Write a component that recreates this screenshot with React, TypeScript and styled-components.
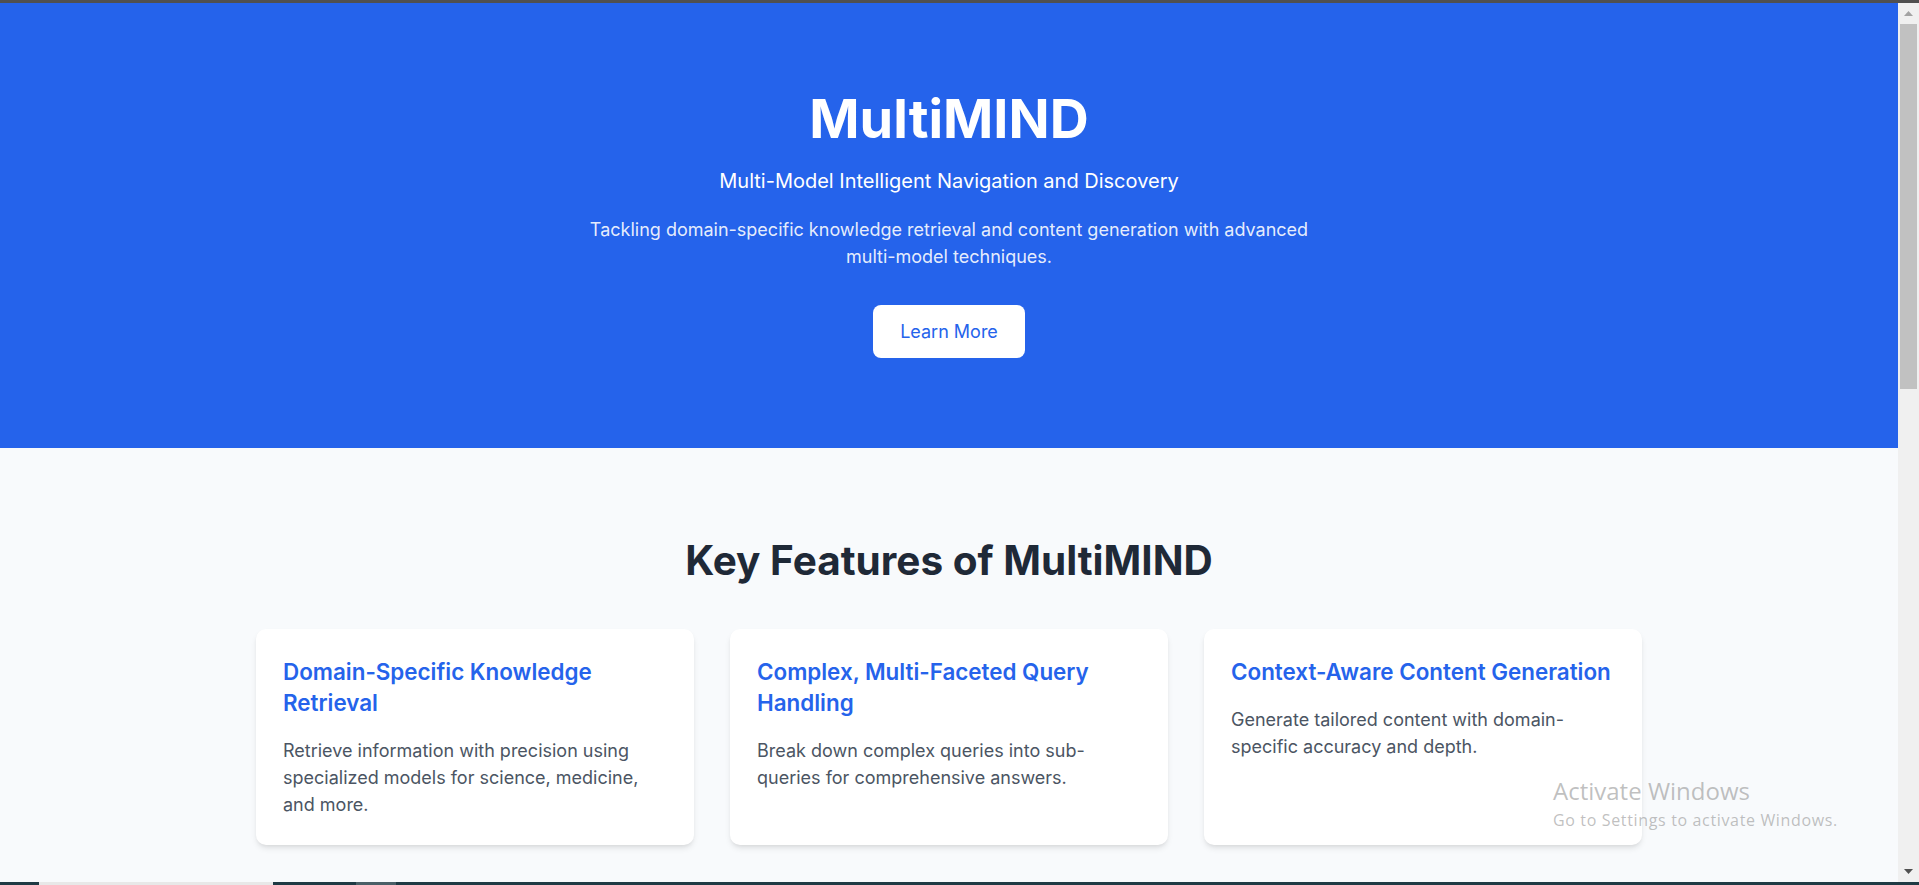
import React from "react";
import styled, { createGlobalStyle } from "styled-components";

const GlobalStyle = createGlobalStyle`
  * { box-sizing: border-box; }
  html, body { margin: 0; padding: 0; height: 100%; overflow: hidden; }
  body { font-family: Inter, "Noto Sans", sans-serif; }
  #root { height: 100%; }
`;

const Screen = styled.div`
  display: flex;
  flex-direction: column;
  width: 1919px;
  height: 885px;
  position: relative;
  overflow: hidden;
  background: #f8fafc;
`;

const TopStrip = styled.div`
  height: 3px;
  flex: none;
  background: #505050;
`;

const Middle = styled.div`
  display: flex;
  flex: 1;
  min-height: 0;
`;

const Page = styled.main`
  flex: 1;
  min-width: 0;
  overflow: hidden;
  background: #f8fafc;
`;

const Hero = styled.section`
  background: #2563eb;
  color: #ffffff;
  text-align: center;
  padding: 82px 24px 90px;
  display: flex;
  flex-direction: column;
  align-items: center;
`;

const Title = styled.h1`
  margin: 0;
  font-size: 54px;
  line-height: 68px;
  font-weight: 700;
`;

const Subtitle = styled.p`
  margin: 14px 0 0;
  font-size: 20px;
  line-height: 28px;
  font-weight: 400;
`;

const Lead = styled.p`
  margin: 21px 0 0;
  max-width: 768px;
  font-size: 18px;
  line-height: 27px;
  color: rgba(255, 255, 255, 0.9);
`;

const PrimaryButton = styled.button`
  margin-top: 35px;
  border: none;
  background: #ffffff;
  color: #2563eb;
  font-family: inherit;
  font-size: 18px;
  line-height: 27px;
  font-weight: 400;
  padding: 13px 27px;
  border-radius: 8px;
  cursor: pointer;
`;

const Features = styled.section`
  padding: 89px 0 0;
  display: flex;
  flex-direction: column;
  align-items: center;
`;

const SectionTitle = styled.h2`
  margin: 0;
  font-size: 40.5px;
  line-height: 48px;
  font-weight: 700;
  color: #1f2937;
`;

const CardGrid = styled.div`
  margin-top: 44px;
  width: 1386px;
  display: grid;
  grid-template-columns: repeat(3, 1fr);
  gap: 36px;
`;

const Card = styled.article`
  background: #ffffff;
  border-radius: 10px;
  padding: 28px 27px 27px;
  box-shadow: 0 4px 6px -1px rgba(0, 0, 0, 0.1), 0 2px 4px -2px rgba(0, 0, 0, 0.08);
  min-height: 216px;
`;

const CardTitle = styled.h3`
  margin: 0;
  font-size: 22.4px;
  line-height: 30.8px;
  font-weight: 600;
  color: #2563eb;
`;

const CardText = styled.p`
  margin: 18px 0 0;
  font-size: 18px;
  line-height: 27px;
  color: #4b5563;
`;

const Scrollbar = styled.div`
  width: 21px;
  flex: none;
  background: #f0f0f0;
  display: flex;
  flex-direction: column;
  align-items: center;
  padding: 0 2px;
`;

const ArrowBox = styled.div`
  height: 21px;
  width: 100%;
  display: flex;
  align-items: center;
  justify-content: center;
  flex: none;
`;

const Thumb = styled.div`
  width: 17px;
  height: 365px;
  background: #c1c1c1;
  flex: none;
`;

const Track = styled.div`
  flex: 1;
`;

const Taskbar = styled.div`
  height: 3px;
  flex: none;
  display: flex;
  background: #1f3a44;
`;

const TaskSegment = styled.div<{ $w: number; $c: string }>`
  width: ${(p) => p.$w}px;
  background: ${(p) => p.$c};
  flex: none;
`;

const Watermark = styled.div`
  position: absolute;
  left: 1553px;
  top: 776px;
  font-family: "Open Sans", "Noto Sans", sans-serif;
  color: rgba(150, 150, 150, 0.6);
  pointer-events: none;
`;

const WatermarkTitle = styled.div`
  font-size: 24px;
  line-height: 30px;
`;

const WatermarkSub = styled.div`
  font-size: 16px;
  line-height: 22px;
  margin-top: 3px;
  letter-spacing: 0.65px;
`;

const features = [
  {
    title: "Domain-Specific Knowledge Retrieval",
    text: "Retrieve information with precision using specialized models for science, medicine, and more.",
  },
  {
    title: "Complex, Multi-Faceted Query Handling",
    text: "Break down complex queries into sub-queries for comprehensive answers.",
  },
  {
    title: "Context-Aware Content Generation",
    text: "Generate tailored content with domain-specific accuracy and depth.",
  },
];

export default function App() {
  return (
    <>
      <GlobalStyle />
      <Screen>
        <TopStrip />
        <Middle>
          <Page>
            <Hero>
              <Title>MultiMIND</Title>
              <Subtitle>Multi-Model Intelligent Navigation and Discovery</Subtitle>
              <Lead>
                Tackling domain-specific knowledge retrieval and content generation with advanced
                multi-model techniques.
              </Lead>
              <PrimaryButton>Learn More</PrimaryButton>
            </Hero>
            <Features>
              <SectionTitle>Key Features of MultiMIND</SectionTitle>
              <CardGrid>
                {features.map((f) => (
                  <Card key={f.title}>
                    <CardTitle>{f.title}</CardTitle>
                    <CardText>{f.text}</CardText>
                  </Card>
                ))}
              </CardGrid>
            </Features>
          </Page>
          <Scrollbar>
            <ArrowBox>
              <svg width="9" height="6" viewBox="0 0 9 6">
                <polygon points="4.5,0 9,5 0,5" fill="#a3a3a3" />
              </svg>
            </ArrowBox>
            <Thumb />
            <Track />
            <ArrowBox>
              <svg width="9" height="6" viewBox="0 0 9 6">
                <polygon points="0,0 9,0 4.5,5" fill="#505050" />
              </svg>
            </ArrowBox>
          </Scrollbar>
        </Middle>
        <Taskbar>
          <TaskSegment $w={39} $c="#1f3a44" />
          <TaskSegment $w={234} $c="#e8e8e8" />
          <TaskSegment $w={83} $c="#1f3a44" />
          <TaskSegment $w={40} $c="#4a5f67" />
        </Taskbar>
        <Watermark>
          <WatermarkTitle>Activate Windows</WatermarkTitle>
          <WatermarkSub>Go to Settings to activate Windows.</WatermarkSub>
        </Watermark>
      </Screen>
    </>
  );
}
